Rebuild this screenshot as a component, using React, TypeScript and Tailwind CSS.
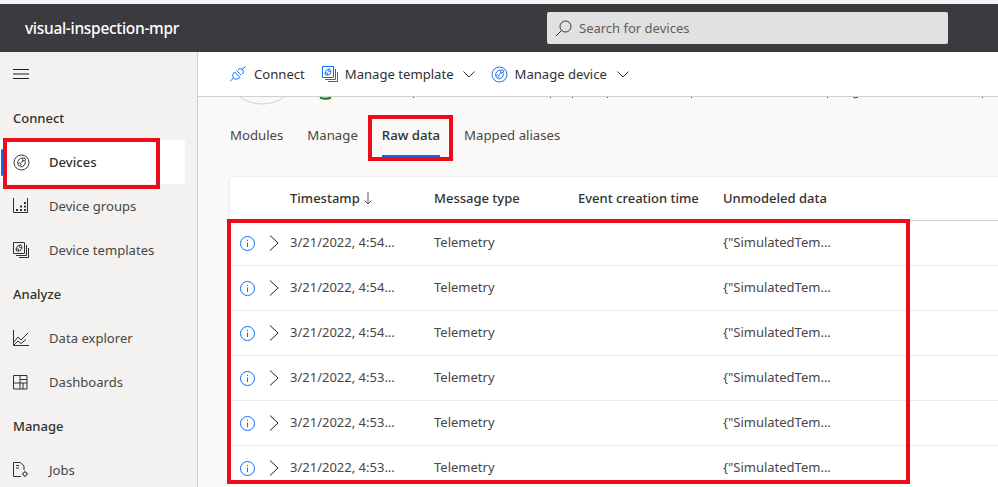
import React from "react";

const font = { fontFamily: '"Noto Sans","Open Sans",sans-serif' };

const Hamburger = () => (
  <svg width="16" height="10" viewBox="0 0 16 10" fill="none" stroke="#201f1e" strokeWidth="1">
    <path d="M0 .5h16M0 5h16M0 9.500h16" />
  </svg>
);

const DeviceIcon = ({ c = "#323130", s = 17 }: { c?: string; s?: number }) => (
  <svg width={s} height={s} viewBox="0 0 17 17" fill="none" stroke={c} strokeWidth="1">
    <circle cx="8.500" cy="8.500" r="7.500" />
    <path d="M4.500 9.500C4.500 6 7 4 9.500 4M12.500 7.500c0 3.500-2.500 5.500-5 5.500" />
    <path d="M8 8.500l2.500-2" />
    <circle cx="11" cy="5.500" r="1.500" />
    <circle cx="6.500" cy="10.500" r="1.500" />
  </svg>
);

const GroupsIcon = () => (
  <svg width="16" height="16" viewBox="0 0 16 16" fill="none" stroke="#323130" strokeWidth="1">
    <path d="M.5 0v14.500H15M14.500 0v14" />
    <path d="M3 12h2M7 12h2M11 12h2M7 8.500h2M11 8.500h2M11 5h2" strokeWidth="2" />
  </svg>
);

const TemplateIcon = ({ c = "#323130" }: { c?: string }) => (
  <svg width="16" height="16" viewBox="0 0 16 16" fill="none" stroke={c} strokeWidth="1">
    <path d="M.5.500h11v11H.5z" />
    <path d="M13.500 3v10.500H3M15.500 6v9.500H6" />
    <path d="M3 8c0-3 2-5 5-5M9 5c0 2-1 4-4 4" />
    <circle cx="7.500" cy="4.500" r="1.200" />
    <circle cx="4.500" cy="8" r="1.200" />
  </svg>
);

const ChartIcon = () => (
  <svg width="16" height="16" viewBox="0 0 16 16" fill="none" stroke="#323130" strokeWidth="1">
    <path d="M.5 0v15.500H16" />
    <path d="M1 12l4-5 3 3 7-7M1 15l4-4 3 2.500 5-4" />
  </svg>
);

const DashIcon = () => (
  <svg width="15" height="15" viewBox="0 0 15 15" fill="none" stroke="#323130" strokeWidth="1">
    <path d="M.5.500h13.500v13.500H.5zM.5 8h13.500M7 .500v13.500M7 4.500h7M10 8v6" />
  </svg>
);

const JobsIcon = () => (
  <svg width="16" height="16" viewBox="0 0 16 16" fill="none" stroke="#323130" strokeWidth="1">
    <path d="M8 14.500H.5V.500h7l3.500 3.500v4" />
    <path d="M3 3.500h3M3 6h3" />
    <circle cx="12" cy="12" r="2" />
    <path d="M12 8.800v1M12 14.200v1M8.800 12h1M14.200 12h1" />
  </svg>
);

const PlugIcon = () => (
  <svg width="16" height="16" viewBox="0 0 16 16" fill="none" stroke="#0b6ef6" strokeWidth="1">
    <path d="M0 15.500l3.500-3.500M11.500 4L15.500.500" />
    <path d="M6.500 4.500l5 5M3.500 12c-1.500-2-.5-4.500 1-6l5.500 5.500c-1.500 1.500-4.500 2.500-6.500.5z" />
    <path d="M8 3.500c1.500-1 3-1 4.500 0 1 1.500 1 3 0 4.500" />
  </svg>
);

const Chevron = () => (
  <svg width="12" height="7" viewBox="0 0 12 7" fill="none" stroke="#323130" strokeWidth="1">
    <path d="M.5.500L6 6l5.500-5.500" />
  </svg>
);

const InfoIcon = () => (
  <svg width="15" height="15" viewBox="0 0 15 15" fill="none" stroke="#0b6ef6" strokeWidth="1">
    <circle cx="7.500" cy="7.500" r="7" />
    <path d="M7.500 6.500V11" />
    <path d="M7.500 3.800v1.200" />
  </svg>
);

const RowChevron = () => (
  <svg width="10" height="16" viewBox="0 0 10 16" fill="none" stroke="#201f1e" strokeWidth="1">
    <path d="M1 .500L9 8l-8 7.500" />
  </svg>
);

const SectionTitle = ({ children, className }: { children: React.ReactNode; className: string }) => (
  <div className={`pl-[13px] text-[13px] leading-[20px] font-medium text-[#323130] ${className}`}>{children}</div>
);

const NavItem = ({ icon, label }: { icon: React.ReactNode; label: string }) => (
  <div className="flex h-[44px] items-center">
    <div className="flex w-[49px] pl-[13px]">{icon}</div>
    <span className="mt-[2px] text-[13.100px] text-[#484644]">{label}</span>
  </div>
);

const rows = ["4:54", "4:54", "4:54", "4:53", "4:53", "4:53"];

export default function App() {
  return (
    <div className="relative flex h-[487px] w-[998px] flex-col overflow-hidden bg-white" style={font}>
      <div className="h-[4px] shrink-0 bg-[#f3f3f3]" />
      <header className="flex h-[48px] shrink-0 items-center bg-[#3b3a3f]">
        <div className="mt-[2px] w-[547px] pl-[25px] text-[15.500px] font-medium tracking-[-0.3px] text-white">visual-inspection-mpr</div>
        <div className="flex h-[32px] w-[401px] items-center gap-[7px] rounded-[2px] bg-[#e1e1e1] pl-[8px] text-[13px] text-[#605e5c]">
          <svg width="17" height="17" viewBox="0 0 17 17" fill="none" stroke="#323130" strokeWidth="1">
            <circle cx="10.500" cy="6.500" r="5.500" />
            <path d="M6.500 10.500L1 16" />
          </svg>
          <span className="mt-[2px]">Search for devices</span>
        </div>
      </header>
      <div className="flex min-h-0 flex-1">
        <aside className="w-[198px] shrink-0 border-r border-[#d2d0ce] bg-[#f3f2f1]">
          <div className="pt-[17px] pl-[13px]"><Hamburger /></div>
          <SectionTitle className="mt-[29px]">Connect</SectionTitle>
          <div className="relative mt-[12px] mr-[12px] flex h-[44px] items-center bg-white">
            <div className="absolute top-[9px] left-[1px] h-[27px] w-[2px] rounded bg-[#0b6ef6]" />
            <div className="flex w-[49px] pl-[13px]"><DeviceIcon /></div>
            <span className="mt-[2px] text-[13.100px] font-medium text-[#323130]">Devices</span>
          </div>
          <NavItem icon={<GroupsIcon />} label="Device groups" />
          <NavItem icon={<TemplateIcon />} label="Device templates" />
          <SectionTitle className="my-[12px]">Analyze</SectionTitle>
          <NavItem icon={<ChartIcon />} label="Data explorer" />
          <NavItem icon={<DashIcon />} label="Dashboards" />
          <SectionTitle className="my-[12px]">Manage</SectionTitle>
          <NavItem icon={<JobsIcon />} label="Jobs" />
        </aside>
        <main className="min-w-0 flex-1 bg-[#faf9f8]">
          <div className="flex h-[45px] items-center border-b border-[#d2d0ce] bg-white pl-[32px] text-[13.100px] text-[#323130]">
            <PlugIcon />
            <span className="mt-[2px] ml-[8px]">Connect</span>
            <span className="ml-[17px]"><TemplateIcon c="#0b6ef6" /></span>
            <span className="mt-[2px] ml-[7px]">Manage template</span>
            <span className="ml-[9px]"><Chevron /></span>
            <span className="ml-[16px]"><DeviceIcon c="#0b6ef6" /></span>
            <span className="mt-[2px] ml-[7px]">Manage device</span>
            <span className="ml-[10px]"><Chevron /></span>
          </div>
          <svg width="800" height="8" viewBox="0 0 800 8" fill="none" className="block">
            <path d="M42 0c5 4 14 7 22 7s17-3 22-7" stroke="#d2d0ce" />
            <path d="M122 .500c2 1.500 8 1.500 11 0" stroke="#107c10" strokeWidth="2" />
            <path d="M215.500 0v1M352.500 0v1M374.500 0v1M409.500 0v1M493.500 0v1M629.500 0v1M784.500 0v1M655 0l2 1 3-1" stroke="#484644" />
          </svg>
          <div className="flex h-[52px] gap-[24px] pt-[20px] pl-[32px] text-[13.200px] leading-[20px] text-[#484644]">
            <div>Modules</div>
            <div>Manage</div>
            <div className="relative font-medium text-[#323130]">
              Raw data
              <div className="absolute top-[30px] right-0 left-0 h-[2px] bg-[#0b6ef6]" />
            </div>
            <div>Mapped aliases</div>
          </div>
          <div className="mt-[20px] ml-[32px] rounded-tl-[2px] bg-white shadow-[0_0_3px_rgba(0,0,0,0.12)]">
            <div className="flex h-[44px] items-center border-b border-[#d2d0ce] text-[13px] font-medium text-[#323130]">
              <div className="flex w-[204px] items-center gap-[4px] pl-[60px]">
                Timestamp
                <svg width="8" height="13" viewBox="0 0 8 13" fill="none" stroke="#605e5c" strokeWidth="1">
                  <path d="M4 0v12M.5 8.500L4 12l3.500-3.500" />
                </svg>
              </div>
              <div className="w-[144px]">Message type</div>
              <div className="w-[145px]">Event creation time</div>
              <div>Unmodeled data</div>
            </div>
            {rows.map((t, i) => (
              <div key={i} className="flex h-[45px] items-center border-b border-[#edebe9] text-[13px] text-[#484644]">
                <div className="flex w-[60px] items-center pl-[10px]">
                  <InfoIcon />
                  <span className="ml-[14px]"><RowChevron /></span>
                </div>
                <div className="w-[144px]">{`3/21/2022, ${t}...`}</div>
                <div className="w-[289px]">Telemetry</div>
                <div>{'{"SimulatedTem...'}</div>
              </div>
            ))}
          </div>
        </main>
      </div>
      <div className="pointer-events-none absolute top-[138px] left-[3px] h-[51px] w-[157px] border-4 border-[#ec0c1c]" />
      <div className="pointer-events-none absolute top-[115px] left-[368px] h-[46px] w-[85px] border-4 border-[#ec0c1c]" />
      <div className="pointer-events-none absolute top-[219px] left-[227px] h-[265px] w-[683px] border-4 border-[#ec0c1c]" />
    </div>
  );
}
